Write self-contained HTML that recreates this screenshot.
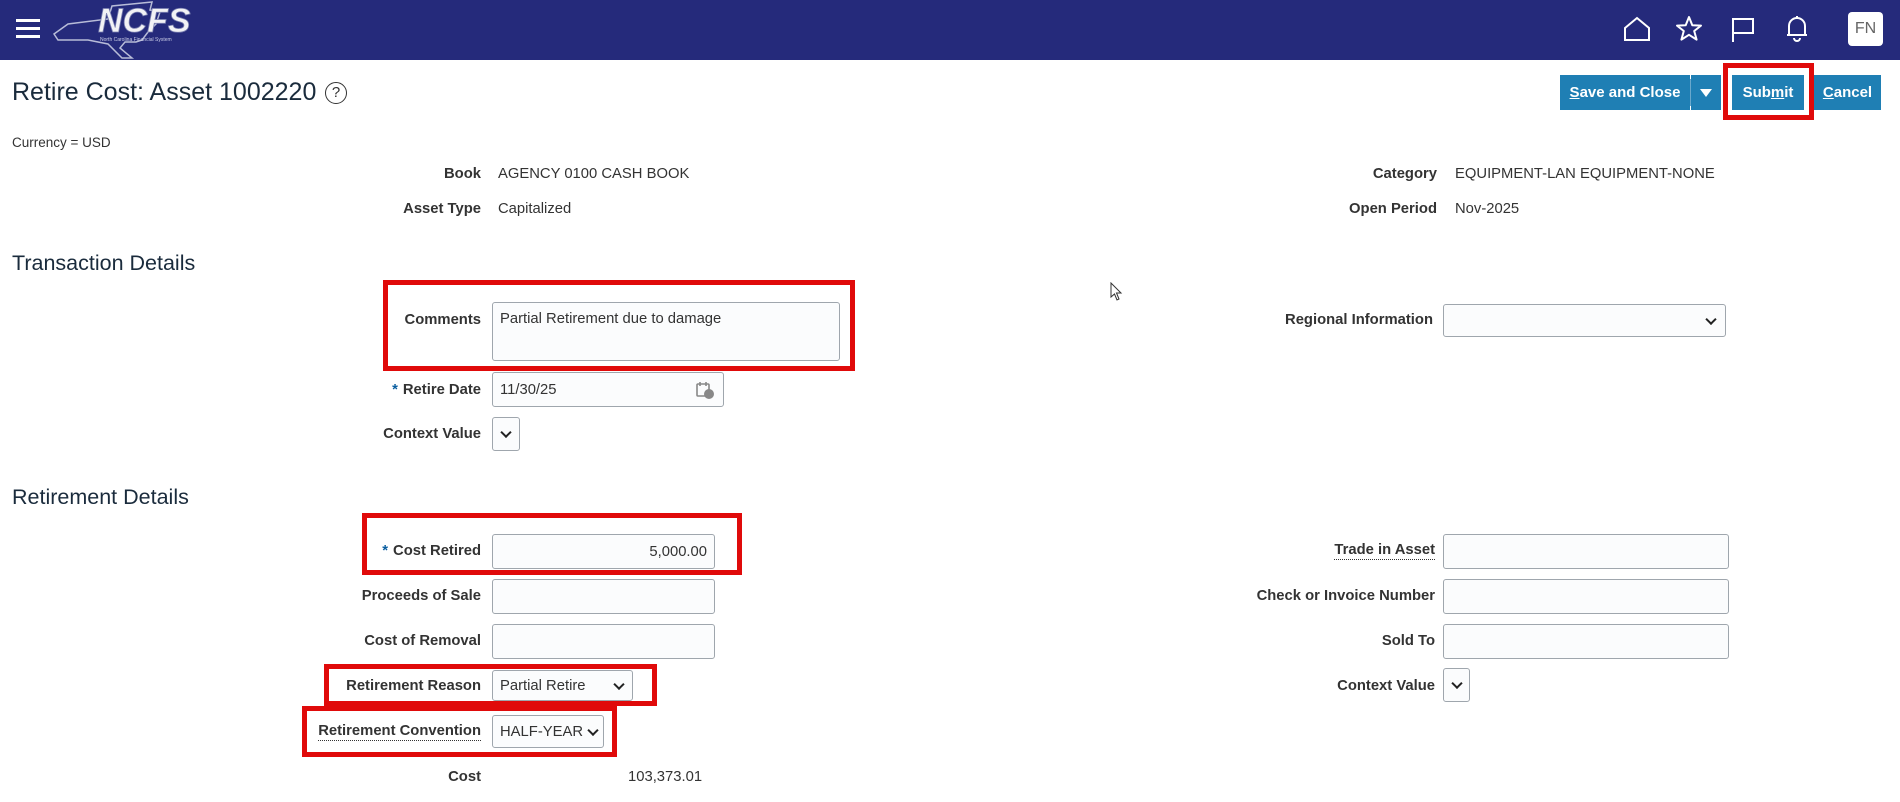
<!DOCTYPE html>
<html><head><meta charset="utf-8"><style>
*{box-sizing:border-box;margin:0;padding:0}
body{width:1900px;height:802px;overflow:hidden;background:#fff;font-family:"Liberation Sans",Arial,sans-serif;color:#333;position:relative}
.hdr{position:absolute;left:0;top:0;width:1900px;height:60px;background:#252a7b}
.a{position:absolute;white-space:nowrap}
.lbl{position:absolute;font-size:14.8px;font-weight:bold;color:#333;text-align:right;white-space:nowrap;line-height:20px}
.val{position:absolute;font-size:14.8px;color:#333;line-height:20px;white-space:nowrap}
.in{position:absolute;border:1px solid #9fa6ad;border-radius:3px;background:#fbfcfd;font-size:14.8px;color:#333;padding-left:7px;display:flex;align-items:center}
.red{position:absolute;border:5px solid #e00a0a}
.sec{position:absolute;left:12px;font-size:21.5px;color:#1a2b3c}
.chev{position:absolute;right:6px;top:50%;width:8px;height:8px;border-right:2px solid #222;border-bottom:2px solid #222;transform:translateY(-70%) rotate(45deg)}
.btn{position:absolute;top:75px;height:35px;background:#1f7fb4;color:#fff;font-weight:bold;font-size:15px;display:flex;align-items:center;justify-content:center}
.star{color:#0a5ea0;font-weight:bold;margin-right:5px}
</style></head><body>
<div class="hdr">
 <div class="a" style="left:16px;top:19px;width:24px;height:3px;background:#fff;box-shadow:0 8px 0 #fff,0 16px 0 #fff"></div>
 <svg class="a" style="left:48px;top:0" width="160" height="60" viewBox="0 0 160 60">
  <path d="M6 34 L20 24 L60 19 L64 6 L104 2 L102 10 L112 12 L108 24 L100 32 L94 40 L88 42 L77 42 L72 48 L84 58 L74 58 L60 44 L40 40 L10 40 Z" fill="none" stroke="#b8bcd8" stroke-width="1.5"/>
  <text x="50" y="32" font-family="Liberation Sans" font-weight="bold" font-style="italic" font-size="34" fill="#f2f2f5" stroke="#7a7fb0" stroke-width="0.8">NCFS</text>
  <text x="52" y="41" font-family="Liberation Sans" font-size="5" fill="#c8cbe5">North Carolina Financial System</text>
 </svg>
 <svg class="a" style="left:1623px;top:16px" width="28" height="26" viewBox="0 0 28 26"><path d="M2 12 L14 2 L26 12 V24 H2 Z" fill="none" stroke="#fff" stroke-width="2"/></svg>
 <svg class="a" style="left:1675px;top:15px" width="28" height="28" viewBox="0 0 28 28"><path d="M14 2 L17.3 10.2 L26 10.6 L19.2 16 L21.6 24.6 L14 19.8 L6.4 24.6 L8.8 16 L2 10.6 L10.7 10.2 Z" fill="none" stroke="#fff" stroke-width="2" stroke-linejoin="round"/></svg>
 <svg class="a" style="left:1730px;top:16px" width="26" height="27" viewBox="0 0 26 27"><path d="M3 26 V3 H23 V17 H3" fill="none" stroke="#fff" stroke-width="2"/></svg>
 <svg class="a" style="left:1785px;top:14px" width="24" height="28" viewBox="0 0 24 28"><path d="M4 21 V12 A8 8 0 0 1 20 12 V21 Z M2 21 H22 M12 2 V4 M9 24 A3 3 0 0 0 15 24" fill="none" stroke="#fff" stroke-width="2"/></svg>
 <div class="a" style="left:1848px;top:12px;width:35px;height:34px;background:#fff;border-radius:4px;color:#666;font-size:16px;text-align:center;line-height:34px">FN</div>
</div>

<div class="a" style="left:12px;top:78px;font-size:25px;color:#1a2b3c">Retire Cost: Asset 1002220</div>
<div class="a" style="left:325px;top:82px;width:22px;height:22px;border:1.5px solid #333;border-radius:50%;font-size:15px;text-align:center;line-height:19px;color:#333">?</div>

<div class="btn" style="left:1560px;width:130px"><span><u>S</u>ave and Close</span></div>
<div class="a" style="left:1690px;top:79px;width:1px;height:27px;background:#6aa8cc"></div>
<div class="btn" style="left:1691px;width:30px"><span style="width:0;height:0;border-left:6px solid transparent;border-right:6px solid transparent;border-top:8px solid #fff"></span></div>
<div class="btn" style="left:1732px;width:72px"><span>Sub<u>m</u>it</span></div>
<div class="btn" style="left:1814px;width:67px"><span><u>C</u>ancel</span></div>
<div class="red" style="left:1723px;top:63px;width:91px;height:57px"></div>

<div class="val" style="left:12px;top:133px;font-size:13.5px">Currency = USD</div>

<div class="lbl" style="right:1419px;top:164px">Book</div><div class="val" style="left:498px;top:164px">AGENCY 0100 CASH BOOK</div>
<div class="lbl" style="right:1419px;top:199px">Asset Type</div><div class="val" style="left:498px;top:199px">Capitalized</div>
<div class="lbl" style="right:463px;top:164px">Category</div><div class="val" style="left:1455px;top:164px">EQUIPMENT-LAN EQUIPMENT-NONE</div>
<div class="lbl" style="right:463px;top:199px">Open Period</div><div class="val" style="left:1455px;top:199px">Nov-2025</div>

<div class="sec" style="top:251px">Transaction Details</div>
<div class="lbl" style="right:1419px;top:310px">Comments</div>
<div class="in" style="left:492px;top:302px;width:348px;height:59px;align-items:flex-start;padding-top:8px">Partial Retirement due to damage</div>
<div class="red" style="left:383px;top:280px;width:472px;height:91px"></div>
<div class="lbl" style="right:1419px;top:380px"><span class="star">*</span>Retire Date</div>
<div class="in" style="left:492px;top:372px;width:232px;height:35px">11/30/25
 <svg class="a" style="right:8px;top:7px" width="20" height="20" viewBox="0 0 20 20"><rect x="2" y="4" width="12" height="12" rx="1" fill="none" stroke="#888" stroke-width="1.6"/><path d="M5 2v4M11 2v4" stroke="#888" stroke-width="1.6"/><circle cx="14" cy="14" r="5" fill="#888"/></svg></div>
<div class="lbl" style="right:1419px;top:424px">Context Value</div>
<div class="in" style="left:492px;top:417px;width:28px;height:34px"><span class="chev" style="right:9px"></span></div>

<div class="lbl" style="right:467px;top:310px">Regional Information</div>
<div class="in" style="left:1443px;top:304px;width:283px;height:33px"><span class="chev" style="right:10px"></span></div>

<div class="sec" style="top:485px">Retirement Details</div>
<div class="lbl" style="right:1419px;top:541px"><span class="star">*</span>Cost Retired</div>
<div class="in" style="left:492px;top:534px;width:223px;height:35px;justify-content:flex-end;padding-right:7px">5,000.00</div>
<div class="red" style="left:362px;top:513px;width:380px;height:62px"></div>
<div class="lbl" style="right:1419px;top:586px">Proceeds of Sale</div>
<div class="in" style="left:492px;top:579px;width:223px;height:35px"></div>
<div class="lbl" style="right:1419px;top:631px">Cost of Removal</div>
<div class="in" style="left:492px;top:624px;width:223px;height:35px"></div>
<div class="lbl" style="right:1419px;top:676px">Retirement Reason</div>
<div class="in" style="left:492px;top:670px;width:141px;height:31px">Partial Retire<span class="chev" style="right:9px"></span></div>
<div class="red" style="left:324px;top:664px;width:333px;height:42px"></div>
<div class="lbl" style="right:1419px;top:722px;border-bottom:1px dotted #333;line-height:18px">Retirement Convention</div>
<div class="in" style="left:492px;top:715px;width:112px;height:33px">HALF-YEAR<span class="chev" style="right:6px"></span></div>
<div class="red" style="left:302px;top:706px;width:315px;height:51px"></div>
<div class="lbl" style="right:1419px;top:767px">Cost</div>
<div class="val" style="left:628px;top:767px">103,373.01</div>

<div class="lbl" style="right:465px;top:541px;border-bottom:1px dotted #333;line-height:18px">Trade in Asset</div>
<div class="in" style="left:1443px;top:534px;width:286px;height:35px"></div>
<div class="lbl" style="right:465px;top:586px">Check or Invoice Number</div>
<div class="in" style="left:1443px;top:579px;width:286px;height:35px"></div>
<div class="lbl" style="right:465px;top:631px">Sold To</div>
<div class="in" style="left:1443px;top:624px;width:286px;height:35px"></div>
<div class="lbl" style="right:465px;top:676px">Context Value</div>
<div class="in" style="left:1443px;top:668px;width:27px;height:34px"><span class="chev" style="right:8px"></span></div>

<svg class="a" style="left:1110px;top:282px" width="14" height="20" viewBox="0 0 14 20"><path d="M1 1 V15 L4.5 12 L7 18 L9 17 L6.5 11 L11 11 Z" fill="#fff" stroke="#333" stroke-width="1"/></svg>
</body></html>
